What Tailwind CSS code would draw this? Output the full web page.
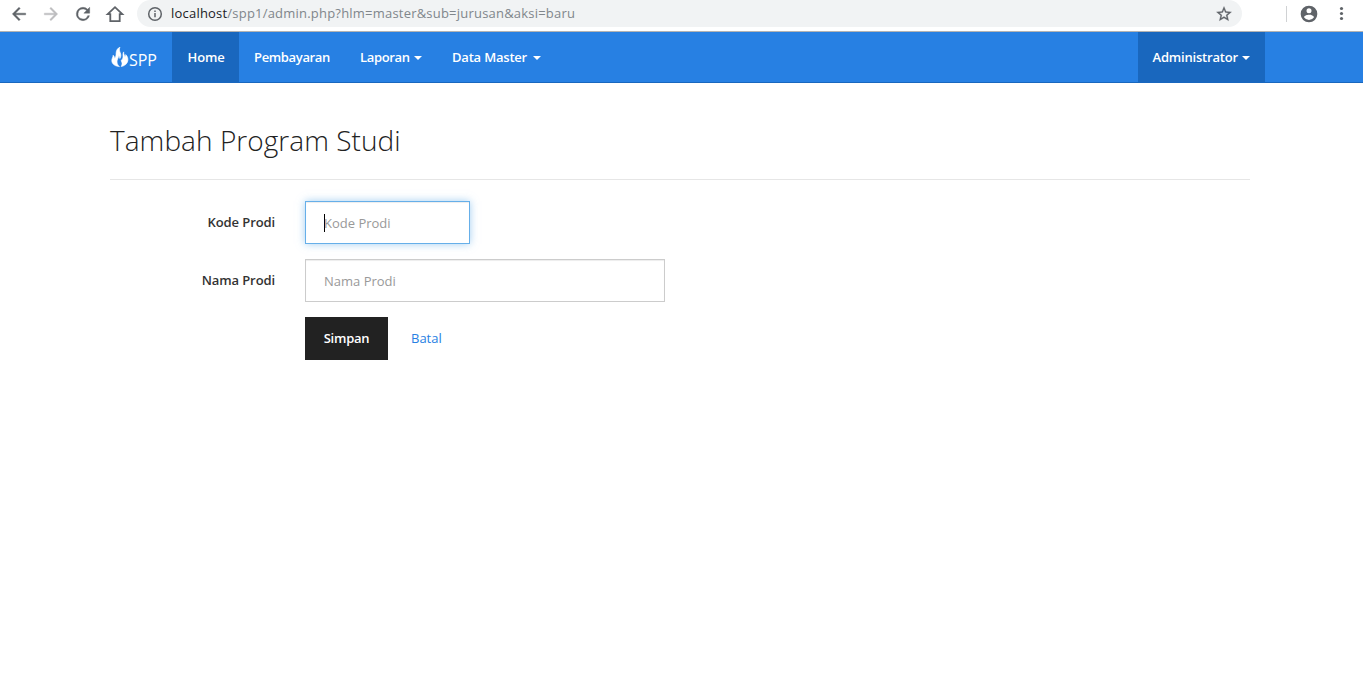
<!DOCTYPE html>
<html lang="id">
<head>
<meta charset="utf-8">
<title>Tambah Program Studi</title>
<script src="https://cdn.jsdelivr.net/npm/@tailwindcss/browser@4"></script>
</head>
<body class="h-[683px] overflow-hidden bg-white font-['Open_Sans',sans-serif] text-[13px] text-[#333]">
<header class="flex h-[32px] items-start border-b border-[#b3b3b3] bg-white text-[#5f6368]">
  <div class="flex h-[27px] w-[137px] shrink-0 items-center gap-3 pl-[9px]">
    <svg class="size-5" viewBox="0 0 24 24" fill="currentColor" stroke="currentColor" stroke-width=".5"><path d="M20 11H7.830l5.590-5.590L12 4l-8 8 8 8 1.410-1.410L7.830 13H20z"/></svg>
    <svg class="size-5 text-[#bdbdbf]" viewBox="0 0 24 24" fill="currentColor" stroke="currentColor" stroke-width=".5"><path d="M12 4l-1.410 1.410L16.170 11H4v2h12.170l-5.580 5.590L12 20l8-8z"/></svg>
    <svg class="size-5" viewBox="0 0 24 24" fill="currentColor" stroke="currentColor" stroke-width=".5"><path d="M17.650 6.350A7.960 7.960 0 0012 4a8 8 0 107.730 10h-2.080A6 6 0 1112 6c1.660 0 3.140.69 4.220 1.780L13 11h7V4z"/></svg>
    <svg class="size-5" viewBox="0 0 20 20" fill="none" stroke="currentColor" stroke-width="1.800"><path d="M2.700 10.200L10 3.200l7.300 7h-2.600v6.900H5.300v-6.900z"/></svg>
  </div>
  <div class="flex h-[27px] w-[1105px] shrink-0 items-center rounded-full bg-[#f1f3f4] pr-[9px] pl-[10px]">
    <svg class="size-4" viewBox="0 0 16 16" fill="none" stroke="currentColor" stroke-width="1.5"><circle cx="8" cy="8" r="6.3"/><path d="M8 7v4.2M8 4.5v1.6"/></svg>
    <span class="ml-2 text-[13px] tracking-[0.21px] whitespace-nowrap text-[#80868b]"><span class="text-[#202124]">localhost</span>/spp1/admin.php?hlm=master&amp;sub=jurusan&amp;aksi=baru</span>
    <svg class="ml-auto size-[18px]" viewBox="0 0 24 24" fill="currentColor" stroke="currentColor" stroke-width=".4"><path d="M22 9.240l-7.190-.62L12 2 9.190 8.630 2 9.240l5.460 4.730L5.820 21 12 17.270 18.180 21l-1.630-7.030zM12 15.400l-3.760 2.270 1-4.280-3.320-2.880 4.380-.38L12 6.100l1.710 4.040 4.380.38-3.320 2.880 1 4.280z"/></svg>
  </div>
  <div class="flex h-[27px] grow items-center pl-11">
    <div class="h-4 w-px bg-[#d0d2d4]"></div>
    <svg class="ml-3 size-5" viewBox="0 0 24 24" fill="currentColor"><path d="M12 2a10 10 0 100 20 10 10 0 000-20zm0 3a3 3 0 110 6 3 3 0 010-6zm0 14.200a7.200 7.200 0 01-6-3.220c.03-1.990 4-3.080 6-3.080s5.970 1.090 6 3.080a7.200 7.200 0 01-6 3.220z"/></svg>
    <svg class="ml-[13px] size-5" viewBox="0 0 20 20" fill="currentColor"><circle cx="9.500" cy="4.500" r="1.600"/><circle cx="9.500" cy="9.500" r="1.600"/><circle cx="9.500" cy="14.500" r="1.600"/></svg>
  </div>
</header>
<nav class="flex h-[51px] border-b border-[#1967be] bg-[#2780e3] pl-[110px] font-semibold text-white">
  <a class="flex w-[62px] items-center text-base font-normal">
    <svg class="h-[22px] w-[19px] shrink-0" viewBox="0 0 19 22" fill="currentColor" stroke="currentColor" stroke-width=".6" stroke-linejoin="round"><path d="M10 1.200C9 3.300 9.500 4.800 10.200 6.500c.9 2.200 1 4-.3 6-.2-1.300-.6-2.200-1.300-2.900.2 2.500-1.700 3.700-1.600 6.300.1 2.200 1.300 3.800 2.500 4.700C5.300 20.300 2 18.300 1.800 14.800c-.1-2.500 1.300-3.300 1.300-5.600 1.200.9 1.500 2.100 1.400 3.400 1.600-1.600 1.500-3.400 1.600-5.600C6.300 4 7.700 2.100 10 1.200z"/><path d="M13.700 5.900c-.3 2 .9 3 1.200 4.900.7-.6.9-1.200.8-2.200 1.700 1.700 2.400 3.500 2.200 5.700-.3 3.400-3.200 5.600-6.700 6.200 1.200-2 1.200-3.900-.2-5.900 1.400-.9 2-2.200 2-3.900 0-1.800-.3-3.400.7-4.800z"/></svg>
    <span class="mt-1.5 text-[16px] tracking-[-0.1px]">SPP</span>
  </a>
  <a class="flex h-[50px] w-[67px] items-center bg-[#1967be] pt-0.5 pl-[15.500px] tracking-[-0.1px]">Home</a>
  <a class="flex w-[106px] items-center pt-0.5 pl-[15px] tracking-[-0.35px]">Pembayaran</a>
  <a class="flex w-[92px] items-center pt-0.5 pl-[15px] tracking-[-0.35px]"><span class="w-[54px]">Laporan</span><i class="border-x-4 border-t-4 border-x-transparent border-t-white"></i></a>
  <a class="flex w-[120px] items-center pt-0.5 pl-[15px] tracking-[-0.2px]"><span class="w-[81px] whitespace-nowrap">Data Master</span><i class="border-x-4 border-t-4 border-x-transparent border-t-white"></i></a>
  <a class="mr-[98px] ml-auto flex h-[50px] w-[127px] items-center bg-[#1967be] pt-0.5 pl-[14.500px] tracking-[-0.2px]"><span class="w-[89.500px]">Administrator</span><i class="border-x-4 border-t-4 border-x-transparent border-t-white"></i></a>
</nav>
<main class="ml-[110px] w-[1140px] pt-[37px]">
  <h1 class="h-[60px] border-b border-[#e6e6e6] text-[28px] leading-[40px] font-light tracking-[0.05px] whitespace-nowrap text-[#222]">Tambah Program Studi</h1>
  <form class="mt-[21px] flex flex-col gap-[15px]">
    <div class="flex h-[43px] gap-[30px]">
      <label class="w-[165px] pt-[11px] text-right leading-5 font-semibold tracking-[-0.1px]">Kode Prodi</label>
      <div class="flex w-[165px] items-center border border-[#66afe9] pl-[18px] text-[#999] shadow-[inset_0_1px_1px_rgba(0,0,0,0.075),0_0_8px_rgba(102,175,233,0.6)]"><span class="-mr-px h-[18px] w-px bg-black"></span><span class="mt-0.5">Kode Prodi</span></div>
    </div>
    <div class="flex h-[43px] gap-[30px]">
      <label class="w-[165px] pt-[11px] text-right leading-5 font-semibold tracking-[-0.1px]">Nama Prodi</label>
      <div class="flex w-[360px] items-center border border-[#ccc] pl-[18px] text-[#999] shadow-[inset_0_1px_1px_rgba(0,0,0,0.075)]"><span class="mt-0.5">Nama Prodi</span></div>
    </div>
    <div class="flex h-[43px] items-center pl-[195px]">
      <button type="button" class="h-[43px] w-[83px] bg-[#222] font-semibold tracking-[-0.25px] text-white">Simpan</button>
      <a class="ml-[23px] text-[#2780e3]">Batal</a>
    </div>
  </form>
</main>
</body>
</html>
